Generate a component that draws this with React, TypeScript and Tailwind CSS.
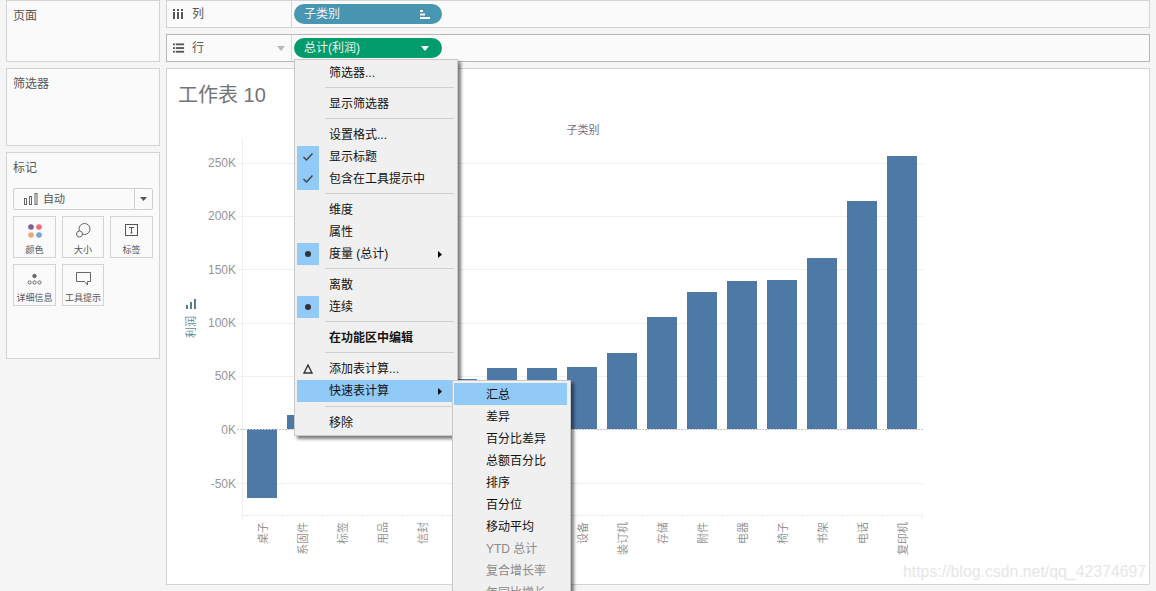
const F = '"Liberation Sans","Noto Sans CJK SC",sans-serif';
const values = [
  ["桌子", 498], ["系固件", 415], ["标签", 400], ["用品", 395], ["信封", 385], ["美术", 379], ["纸张", 368], ["器具", 368], ["设备", 367],
  ["装订机", 353], ["存储", 317], ["附件", 292], ["电器", 281], ["椅子", 280], ["书架", 258], ["电话", 201], ["复印机", 156],
] as [string, number][];
const ticks = [["250K", 163, 4], ["200K", 216, 4], ["150K", 269, 5], ["100K", 323, 4], ["50K", 376, 4], ["0K", 429, 5], ["-50K", 483, 5]] as [string, number, number][];

type Item = { t?: string; mark?: "check" | "dot" | "delta"; arrow?: boolean; bold?: boolean; active?: boolean; sep?: boolean; last?: boolean };
const menu: Item[] = [
  { t: "筛选器..." }, { sep: true }, { t: "显示筛选器" }, { sep: true }, { t: "设置格式..." },
  { t: "显示标题", mark: "check" }, { t: "包含在工具提示中", mark: "check" }, { sep: true },
  { t: "维度" }, { t: "属性" }, { t: "度量 (总计)", mark: "dot", arrow: true }, { sep: true },
  { t: "离散" }, { t: "连续", mark: "dot" }, { sep: true }, { t: "在功能区中编辑", bold: true }, { sep: true },
  { t: "添加表计算...", mark: "delta" }, { t: "快速表计算", arrow: true, active: true }, { sep: true, last: true }, { t: "移除" },
];
const sub = [
  ["汇总", 1], ["差异", 0], ["百分比差异", 0], ["总额百分比", 0], ["排序", 0], ["百分位", 0], ["移动平均", 0], ["YTD 总计", 2], ["复合增长率", 2], ["年同比增长", 2],
] as [string, number][];

function Mark({ m }: { m?: Item["mark"] }) {
  if (m === "check" || m === "dot") {
    return (
      <div className="w-[22px] h-[22px] bg-[#91c9f7] flex items-center justify-center">
        {m === "check" ? (
          <svg width="12" height="10" viewBox="0 0 12 10"><path d="M1.5 5 L4.5 8 L10.5 1.5" fill="none" stroke="#444" strokeWidth="1.5" /></svg>
        ) : (
          <div className="w-[6px] h-[6px] rounded-full bg-[#333]" />
        )}
      </div>
    );
  }
  if (m === "delta") {
    return (
      <div className="w-[22px] h-[22px] flex items-center justify-center">
        <svg width="10" height="10" viewBox="0 0 10 10"><path d="M5 1 L9 9 L1 9 Z" fill="none" stroke="#333" strokeWidth="1.4" /></svg>
      </div>
    );
  }
  return <div className="w-[22px] h-[22px]" />;
}

function Panel({ title, className, children }: { title: string; className: string; children?: React.ReactNode }) {
  return (
    <div className={"border border-[#d4d4d4] bg-[#fafafa] " + className}>
      <div className="pl-[6px] pt-[7px] text-[12px] leading-[16px] text-[#555]">{title}</div>
      {children}
    </div>
  );
}

function Card({ label, children }: { label: string; children: React.ReactNode }) {
  return (
    <div className="h-[42px] border border-[#d4d4d4] flex flex-col items-center bg-[#fafafa]">
      <div className="h-[27px] shrink-0 flex items-center justify-center">{children}</div>
      <div className="text-[9px] leading-[12px] text-[#555] whitespace-nowrap">{label}</div>
    </div>
  );
}

export default function App() {
  return (
    <div className="relative w-[1156px] h-[591px] overflow-hidden bg-[#f5f5f5] flex" style={{ fontFamily: F }}>
      <div className="ml-[6px] w-[154px] flex flex-col gap-[6px]">
        <Panel title="页面" className="h-[62px]" />
        <Panel title="筛选器" className="h-[78px]" />
        <Panel title="标记" className="h-[207px]">
          <div className="mx-[6px] mt-[12px] h-[22px] border border-[#cfcfcf] rounded-[2px] flex items-center">
            <div className="flex-1 flex items-center pl-[10px] gap-[5px]">
              <svg width="14" height="12" viewBox="0 0 14 12" fill="none" stroke="#666"><rect x="0.5" y="5.5" width="2" height="6" /><rect x="5.5" y="3.5" width="2" height="8" /><rect x="11" y="0.5" width="2" height="11" /></svg>
              <span className="text-[11px] text-[#555]">自动</span>
            </div>
            <div className="w-[18px] h-full border-l border-[#cfcfcf] flex items-center justify-center">
              <svg width="7" height="4" viewBox="0 0 7 4"><path d="M0 0H7L3.5 4Z" fill="#555" /></svg>
            </div>
          </div>
          <div className="mx-[6px] mt-[6px] grid grid-cols-[43px_42px_43px] gap-[6px]">
            <Card label="颜色">
              <svg width="16" height="16" viewBox="0 0 16 16"><circle cx="4" cy="4" r="2.8" fill="#7b6294" /><circle cx="12" cy="4" r="2.8" fill="#ef6a7a" /><circle cx="4" cy="12" r="2.8" fill="#f2a67c" /><circle cx="12" cy="12" r="2.8" fill="#7ba3cf" /></svg>
            </Card>
            <Card label="大小">
              <svg width="15" height="15" viewBox="0 0 15 15" fill="#fafafa" stroke="#666"><circle cx="8.5" cy="6" r="5.5" /><circle cx="3.5" cy="11" r="3" /></svg>
            </Card>
            <Card label="标签">
              <svg width="14" height="13" viewBox="0 0 14 13" fill="none" stroke="#555"><rect x="0.5" y="0.5" width="12" height="11" /><path d="M4 3.5H9M6.5 3.5V9M5.5 9H7.5" /></svg>
            </Card>
            <Card label="详细信息">
              <svg width="15" height="12" viewBox="0 0 15 12" fill="none" stroke="#666"><circle cx="7.5" cy="3" r="1.7" fill="#666" /><circle cx="2.5" cy="9.5" r="1.6" /><circle cx="7.5" cy="9.5" r="1.6" /><circle cx="12.5" cy="9.5" r="1.6" /></svg>
            </Card>
            <Card label="工具提示">
              <svg width="15" height="14" viewBox="0 0 15 14" fill="none" stroke="#666"><path d="M0.5 0.5H14.5V9.5H11.5V13L8.5 9.5H0.5Z" /></svg>
            </Card>
          </div>
        </Panel>
      </div>

      <div className="ml-[6px] w-[984px] h-[585px] flex flex-col gap-[6px]">
        <div className="h-[28px] border border-[#d4d4d4] bg-[#fafafa] flex items-center">
          <div className="w-[125px] h-full border-r border-[#d4d4d4] flex items-center pl-[6px] gap-[8px]">
            <svg width="11" height="10" viewBox="0 0 11 10" fill="#555"><rect x="0" y="3" width="2" height="7" /><rect x="4" y="3" width="2" height="7" /><rect x="8" y="3" width="2" height="7" /><rect x="0" y="0" width="2" height="2" /><rect x="4" y="0" width="2" height="2" /><rect x="8" y="0" width="2" height="2" /></svg>
            <span className="text-[12px] text-[#555]">列</span>
          </div>
          <div className="ml-[2px] w-[148px] h-[20px] rounded-full bg-[#4996b2] flex items-center pl-[10px] pr-[12px] justify-between">
            <span className="text-[12px] text-[#f2f2f2]">子类别</span>
            <svg width="10" height="9" viewBox="0 0 10 9" fill="#fff"><rect x="0" y="0" width="3" height="2" /><rect x="0" y="3.5" width="5" height="2" /><rect x="0" y="7" width="10" height="2" /></svg>
          </div>
        </div>
        <div className="h-[28px] border border-[#b8b8b8] bg-[#fafafa] flex items-center">
          <div className="w-[125px] h-full border-r border-[#d4d4d4] flex items-center pl-[6px] gap-[7px]">
            <svg width="12" height="11" viewBox="0 0 13 11" fill="#555"><rect x="0" y="0" width="2" height="2" /><rect x="3" y="0" width="9" height="2" /><rect x="0" y="4" width="2" height="2" /><rect x="3" y="4" width="9" height="2" /><rect x="0" y="8" width="2" height="2" /><rect x="3" y="8" width="9" height="2" /></svg>
            <span className="text-[12px] text-[#555] flex-1">行</span>
            <svg width="8" height="5" viewBox="0 0 8 5" className="mr-[6px]"><path d="M0 0H8L4 5Z" fill="#b8b8b8" /></svg>
          </div>
          <div className="ml-[2px] w-[148px] h-[20px] rounded-full bg-[#009c6b] flex items-center pl-[10px] pr-[13px] justify-between">
            <span className="text-[12px] text-[#f2f2f2]">总计(利润)</span>
            <svg width="8" height="5" viewBox="0 0 8 5"><path d="M0 0H8L4 5Z" fill="#fff" /></svg>
          </div>
        </div>
        <div className="flex-1 border border-[#d4d4d4] bg-white flex flex-col">
          <div className="h-[51px] pl-[11px] pt-[12px] text-[20px] leading-[28px] text-[#747474]">工作表 10</div>
          <svg className="block" width="982" height="464" viewBox="167 120 982 464" fontFamily={F}>
            <text x="583" y="134" fontSize="11" fill="#7a6a7a" textAnchor="middle">子类别</text>
            <line x1="242.5" y1="139" x2="242.5" y2="515" stroke="#efefef" />
            {ticks.map(([l, y, d]) => (
              <g key={l}>
                {l !== "0K" && <line x1="237" y1={y + 0.5} x2="923" y2={y + 0.5} stroke="#efefef" />}
                <text x="236" y={y + d} fontSize="12" fill="#959595" textAnchor="end">{l}</text>
              </g>
            ))}
            {values.map(([n, top], i) => {
              const x = 247 + 40 * i;
              return (
                <g key={n}>
                  <rect x={x} y={Math.min(top, 429)} width="30" height={Math.abs(top - 429)} fill="#4e79a7" />
                  <line x1={242.5 + 40 * i} y1="515" x2={242.5 + 40 * i} y2="519" stroke="#efefef" />
                  <text transform={`translate(${x + 20} 522) rotate(-90)`} fontSize="11" fill="#959595" textAnchor="end">{n}</text>
                </g>
              );
            })}
            <line x1="922.5" y1="515" x2="922.5" y2="519" stroke="#efefef" />
            <line x1="243" y1="515.5" x2="923" y2="515.5" stroke="#efefef" />
            <line x1="237" y1="429.5" x2="923" y2="429.5" stroke="#c4c4c4" strokeDasharray="2 1" />
            <g fill="#5a7f86">
              <rect x="186" y="305" width="2" height="4" />
              <rect x="190" y="302" width="2" height="7" />
              <rect x="194" y="299" width="2" height="10" />
            </g>
            <text transform="translate(195 338) rotate(-90)" fontSize="11" fill="#5a8f96">利润</text>
          </svg>
        </div>
      </div>

      <div className="absolute left-[294px] top-[59px] w-[164px] h-[377px] bg-[#f0f0f0] border border-[#c8c8c8] shadow-[3px_3px_3px_rgba(0,0,0,0.5)] pl-[2px] pr-[3px] pt-[2px]">
        {menu.map((it, i) =>
          it.sep ? (
            <div key={i} className={"pl-[28px] " + (it.last ? "h-[10px] pt-[4px]" : "h-[9px] pt-[3px]")}>
              <div className="w-full h-px bg-[#d0d0d0]" />
            </div>
          ) : (
            <div key={i} className={"h-[22px] flex items-center text-[12px] text-[#111] " + (it.active ? "bg-[#91c9f7] mr-[-3px]" : "")}>
              <Mark m={it.mark} />
              <span className={"ml-[10px] flex-1 whitespace-nowrap " + (it.bold ? "font-bold" : "")}>{it.t}</span>
              {it.arrow && (
                <svg width="4" height="7" viewBox="0 0 4 7" className={it.active ? "mr-[15px]" : "mr-[12px]"}><path d="M0 0L4 3.5L0 7Z" fill="#000" /></svg>
              )}
            </div>
          )
        )}
      </div>

      <div className="absolute left-[452px] top-[380px] w-[119px] h-[230px] bg-[#f0f0f0] border border-[#c8c8c8] shadow-[3px_3px_3px_rgba(0,0,0,0.5)] pl-[1px] pr-[3px] pt-[2px]">
        {sub.map(([t, s]) => (
          <div key={t} className={"h-[22px] pt-[2px] flex items-center pl-[32px] text-[12px] whitespace-nowrap " + (s === 1 ? "bg-[#91c9f7] text-[#111]" : s === 2 ? "text-[#8a8a8a]" : "text-[#111]")}>{t}</div>
        ))}
      </div>

      <div className="absolute left-[903px] top-[562px] text-[15.85px] leading-[20px] text-[#e6e6e6] whitespace-nowrap">https://blog.csdn.net/qq_42374697</div>
    </div>
  );
}
